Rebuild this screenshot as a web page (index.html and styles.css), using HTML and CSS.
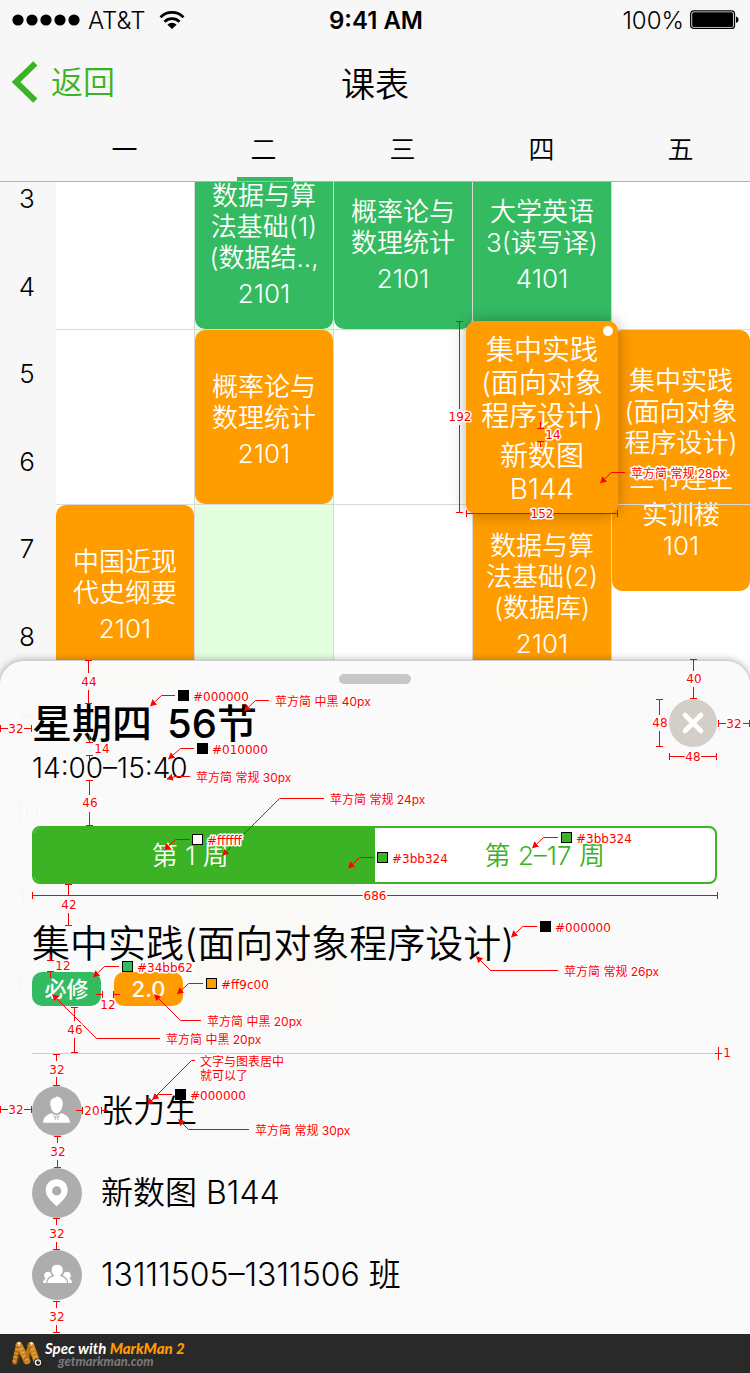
FILE: index.html
```html
<!DOCTYPE html>
<html lang="zh-CN">
<head>
<meta charset="utf-8">
<meta name="viewport" content="width=device-width, initial-scale=1">
<title>课表</title>
<link rel="stylesheet" href="styles.css">
</head>
<body>
<div class="page">
  <header class="top">
    <div class="status">
      <div class="status-side">
        <svg class="signal" width="68" height="12" viewBox="0 0 68 12" aria-hidden="true"><circle cx="6" cy="6" r="5.6"/><circle cx="20" cy="6" r="5.6"/><circle cx="34" cy="6" r="5.6"/><circle cx="48" cy="6" r="5.6"/><circle cx="62" cy="6" r="5.6"/></svg>
        <span>AT&amp;T</span>
        <svg class="wifi" width="26" height="20" viewBox="0 0 26 20" aria-hidden="true"><path d="M1.5 7.2a16.3 16.3 0 0 1 23 0M5.5 11.7a10.8 10.8 0 0 1 15 0" fill="none" stroke="#000" stroke-width="2.7"/><path d="M8.4 14.7a6.6 6.6 0 0 1 9.2 0L13 19z"/></svg>
      </div>
      <span class="clock">9:41 AM</span>
      <div class="status-side status-right">
        <span>100%</span>
        <svg width="50" height="20" viewBox="0 0 50 20" aria-hidden="true"><rect x=".7" y=".8" width="43.8" height="17.6" rx="3" fill="none" stroke="#000" stroke-width="1.3"/><rect x="2.2" y="2.3" width="40.8" height="14.6" rx="1.5"/><path d="M46 6.4c3.4.9 3.4 5.500 0 6.400z"/></svg>
      </div>
    </div>
    <div class="nav">
      <a class="back" href="#">
        <svg width="26" height="42" viewBox="0 0 26 42" aria-hidden="true"><path d="M23.300 2.300 4 21l19.300 18.700" fill="none" stroke="#3bb324" stroke-width="6"/></svg>
        <span>返回</span>
      </a>
      <h1>课表</h1>
    </div>
    <nav class="days">
      <a href="#">一</a><a class="on" href="#">二</a><a href="#">三</a><a href="#">四</a><a href="#">五</a>
    </nav>
  </header>

  <main class="stage">
    <section class="table">
      <div class="hours r1"><span>3</span><span>4</span></div>
      <div class="hours r2"><span>5</span><span>6</span></div>
      <div class="hours r3"><span>7</span><span>8</span></div>
      <div class="hours r4"><span>9</span><span>10</span></div>
      <div class="hours r5"><span>11</span><span>12</span></div>
      <div class="col c1"></div><div class="col c2 today"></div><div class="col c3"></div><div class="col c4"></div><div class="col c5"></div>
      <div class="line r1"></div><div class="line r2"></div><div class="line r3"></div><div class="line r4"></div>

      <article class="card green c2 r1"><p>数据与算<br>法基础(1)<br>(数据结..,</p><p>2101</p></article>
      <article class="card green c3 r1"><p>概率论与<br>数理统计</p><p>2101</p></article>
      <article class="card green c4 r1"><p>大学英语<br>3(读写译)</p><p>4101</p></article>
      <article class="card c2 r2"><p>概率论与<br>数理统计</p><p>2101</p></article>
      <article class="card tall c5"><p>集中实践<br>(面向对象<br>程序设计)</p><p>三节连上</p><p>实训楼<br>101</p></article>
      <article class="card c1 r3"><p>中国近现<br>代史纲要</p><p>2101</p></article>
      <article class="card c4 r3"><p>数据与算<br>法基础(2)<br>(数据库)</p><p>2101</p></article>
      <article class="card c2 r5"><p>概率论与<br>数理统计</p><p>2101</p></article>
      <article class="card picked c4 r2"><i class="dot"></i><p>集中实践<br>(面向对象<br>程序设计)</p><p>新数图<br>B144</p></article>
    </section>

    <section class="sheet">
      <div class="handle"></div>
      <div class="sheet-head">
        <div>
          <h2><span>星期四</span> <span>56节</span></h2>
          <p class="time">14:00–15:40</p>
        </div>
        <button class="close" type="button" aria-label="关闭">
          <svg width="48" height="48" viewBox="0 0 48 48" aria-hidden="true"><path d="M16 16l16 16M32 16L16 32" stroke="#fff" stroke-width="4.600" stroke-linecap="round"/></svg>
        </button>
      </div>
      <div class="segment">
        <button class="seg on" type="button">第 1 周</button>
        <button class="seg" type="button">第 2–17 周</button>
      </div>
      <h3>集中实践(面向对象程序设计)</h3>
      <div class="tags"><span class="tag green">必修</span><span class="tag">2.0</span></div>
      <ul class="facts">
        <li>
          <svg width="50" height="50" viewBox="0 0 50 50" aria-hidden="true"><circle cx="25" cy="25" r="25" fill="#adadad"/><path fill="#fff" d="M24.500 10.500c3.900.4 6.300 2.800 6.200 7-.1 4.700-2.600 9.900-6.200 10s-6.200-5.300-6.200-10c0-3.900 1.700-5.500 5.400-6.100zM19.500 27.300l5 2.200 5-2.200c4.300 1.300 7.900 3.200 8.500 9.500H11c.6-6.300 4.200-8.200 8.500-9.500z"/><path d="M21.200 28.500l1.700 3.300 1.600-2 1.600 2 1.700-3.300M23.700 31l-.6 3M25.300 31l.6 3" fill="none" stroke="#adadad" stroke-width=".8"/></svg>
          <span>张力生</span>
        </li>
        <li>
          <svg width="50" height="50" viewBox="0 0 50 50" aria-hidden="true"><circle cx="25" cy="25" r="25" fill="#adadad"/><path fill="#fff" fill-rule="evenodd" d="M24.700 11.300c6.100 0 11 4.600 11 10.600 0 6.700-5.800 11.200-11 16.400-5.200-5.200-11-9.700-11-16.400 0-6 4.900-10.600 11-10.600zm0 7a4.600 4.600 0 1 0 0 9.200 4.600 4.600 0 0 0 0-9.200z"/></svg>
          <span>新数图 B144</span>
        </li>
        <li>
          <svg width="50" height="50" viewBox="0 0 50 50" aria-hidden="true"><circle cx="25" cy="25" r="25" fill="#adadad"/><g fill="#fff"><circle cx="16" cy="25.500" r="3.800"/><circle cx="35" cy="25.500" r="3.800"/><path d="M11 33c0-3.300 2.400-4.800 5-4.800s4 1.500 4 4.800zM40 33c0-3.300-2.400-4.800-5-4.800s-4 1.500-4 4.800z"/><path stroke="#adadad" stroke-width="1.200" d="M25.200 14.200c3.700 0 6.200 2.600 6.200 6 0 2.300-.9 4.200-2.500 5.500 4 1.100 6.700 3.200 6.900 7.800H14.600c.2-4.600 2.900-6.700 6.900-7.800-1.600-1.300-2.500-3.200-2.500-5.500 0-3.400 2.500-6 6.200-6z"/></g></svg>
          <span>13111505–1311506 班</span>
        </li>
      </ul>
    </section>
  </main>

  <footer class="foot">
    <svg width="32" height="28" viewBox="0 0 32 28" aria-hidden="true">
      <g fill="none" stroke-linecap="round"><path d="M8 5L4 22M20 5l-5 16" stroke="#7a480d" stroke-width="6"/><path d="M8 5l8 16M20 5l6 17" stroke="#d08522" stroke-width="6.500"/><path d="M7 5L3.500 22M19 5l-4.500 15" stroke="#b87318" stroke-width="4"/><path d="M8 5l8 16M20 5l6 17M7 5L3 22" stroke="#f0b65a" stroke-width="3.500" stroke-dasharray="1 3" stroke-linecap="butt"/></g>
      <circle cx="8" cy="3.500" r="1.200" fill="#fff"/><circle cx="20.500" cy="3.500" r="1.200" fill="#fff"/><circle cx="27" cy="22.500" r="4" fill="#111"/><circle cx="27" cy="22.500" r="3.200" fill="#fff"/><circle cx="27.200" cy="22.500" r="2" fill="#111"/><circle cx="28" cy="21.800" r=".7" fill="#fff"/>
    </svg>
    <div>
      <p class="brand">Spec with <b>MarkMan 2</b></p>
      <p class="site">getmarkman.com</p>
    </div>
  </footer>

  <svg class="notes" width="750" height="1373" viewBox="0 0 750 1373">
    <defs>
      <marker id="tip" markerUnits="userSpaceOnUse" markerWidth="8" markerHeight="8" refX="6" refY="3.500" orient="auto"><path d="M0 0l6.500 3.500L0 7z" fill="#f00" stroke="none"/></marker>
    </defs>
    <g class="dim">
      <path d="M456 321.500h7M459.500 321.500V409M459.500 425V512.500M456 512.500h7"/>
      <path d="M540.500 422V428.500M537 428.500h7M537 441.500h7M540.500 441.500V447"/>
      <path d="M466.500 510v7M466.500 513.500H530M553 513.500H617.500M617.500 510v7"/>
      <path d="M85 660.500h7M88.500 660.500V673M88.500 690V703.500M85 703.500h7"/>
      <path d="M.5 725v7M.5 728.500H8M24 728.500H31.500M31.500 725v7"/>
      <path d="M89.500 736V742.500M86 742.500h7M86 755.500h7M89.500 755.500V761"/>
      <path d="M86 780.500h7M89.500 780.500V795M89.500 812V825.500M86 825.500h7"/>
      <path d="M690 659.500h7M693.500 659.500V671M693.500 687V698.500M690 698.500h7"/>
      <path d="M656 699.500h7M659.500 699.500V715M659.500 731V746.500M656 746.500h7"/>
      <path d="M718.500 720v7M718.500 723.500H726M743 723.500H749.500M749.500 720v7"/>
      <path d="M669.500 753v7M669.500 756.500H685M701 756.500H716.500M716.500 753v7"/>
      <path d="M32.500 892v7M32.500 895.500H363M387 895.500H717.500M717.500 892v7"/>
      <path d="M65 884.500h7M68.500 884.500V896M68.500 913V925.500M65 925.500h7"/>
      <path d="M50.500 954V960.500M47 960.500h7M47 971.500h7M50.500 971.500V978"/>
      <path d="M96 994.500H102.500M102.500 991v7M113.500 991v7M113.500 994.500H120"/>
      <path d="M71 1007.500h7M74.500 1007.500V1021M74.500 1038V1052.500M71 1052.500h7"/>
      <path d="M718.500 1047v13M715 1053.500h7"/>
      <path d="M53 1054.500h7M56.500 1054.500V1061M56.500 1077V1085.500M53 1085.500h7"/>
      <path d="M.5 1106v7M.5 1109.500H8M24 1109.500H31.500M31.500 1106v7"/>
      <path d="M76 1110.500H82.500M82.500 1107v7M101.500 1107v7M101.500 1110.500H108"/>
      <path d="M54 1136.500h7M57.500 1136.500V1143M57.500 1160V1167.500M54 1167.500h7"/>
      <path d="M53 1218.500h7M56.500 1218.500V1225M56.500 1242V1249.500M53 1249.500h7"/>
      <path d="M53 1301.500h7M56.500 1301.500V1308M56.500 1325V1332.500M53 1332.500h7"/>
    </g>
    <g class="lead">
      <path d="M625 472.500H611.500L600.500 483"/>
      <path d="M175 695.500H161.500L150.500 706"/>
      <path d="M269 700.500H255.500L244.500 711"/>
      <path d="M194 748.500H180.500L168.500 759"/>
      <path d="M190 776.500H175L167 779"/>
      <path d="M324 798.500H279.500L222.500 855.500"/>
      <path d="M190 839.500H175.500L164.500 850"/>
      <path d="M374 857.500H359.500L348.500 868"/>
      <path d="M558 837.500H543.500L532.500 848"/>
      <path d="M537 926.500H522.500L511.500 937"/>
      <path d="M558 970.500H490.500L476.500 956.500"/>
      <path d="M119 966.500H104.500L93.500 977"/>
      <path d="M203 983.500H188.500L177.500 994"/>
      <path d="M201 1020.500H180.500L154.500 994.500"/>
      <path d="M160 1038.500H96.500L52.500 994.500"/>
      <path d="M195 1060.500H191.500L147.500 1104.500"/>
      <path d="M172 1094.500H158.500L152.500 1099.500"/>
      <path d="M249 1129.500H188.500L178.500 1119.500"/>
    </g>
    <g class="swatch">
      <rect x="178.500" y="690.500" width="10" height="10" fill="#000"/>
      <rect x="197.500" y="743.500" width="10" height="10" fill="#010000"/>
      <rect x="192.500" y="834.500" width="10" height="10" fill="#fff"/>
      <rect x="377.500" y="852.500" width="10" height="10" fill="#3bb324"/>
      <rect x="561.500" y="832.500" width="10" height="10" fill="#3bb324"/>
      <rect x="540.500" y="921.500" width="10" height="10" fill="#000"/>
      <rect x="122.500" y="961.500" width="10" height="10" fill="#34bb62"/>
      <rect x="206.500" y="978.500" width="10" height="10" fill="#ff9c00"/>
      <rect x="175.500" y="1089.500" width="10" height="10" fill="#000"/>
    </g>
    <g class="num">
      <text x="460" y="421">192</text><text x="553" y="439">14</text><text x="542" y="518">152</text>
      <text x="89" y="686">44</text><text x="16" y="733">32</text><text x="102" y="753">14</text><text x="90" y="807">46</text>
      <text x="694" y="683">40</text><text x="660" y="727">48</text><text x="734" y="728">32</text><text x="693" y="761">48</text>
      <text x="375" y="900">686</text><text x="69" y="909">42</text><text x="63" y="970">12</text><text x="108" y="1009">12</text>
      <text x="75" y="1034">46</text><text x="727" y="1057">1</text><text x="57" y="1074">32</text><text x="16" y="1114">32</text>
      <text x="92" y="1115">20</text><text x="58" y="1156">32</text><text x="57" y="1238">32</text><text x="57" y="1321">32</text>
    </g>
    <g class="hex">
      <text x="193" y="701">#000000</text><text x="212" y="754">#010000</text><text x="207" y="845">#ffffff</text>
      <text x="392" y="863">#3bb324</text><text x="576" y="843">#3bb324</text><text x="555" y="932">#000000</text>
      <text x="137" y="972">#34bb62</text><text x="221" y="989">#ff9c00</text><text x="190" y="1100">#000000</text>
    </g>
    <g class="label">
      <text x="631" y="478">苹方简 常规 28px</text><text x="275" y="706">苹方简 中黑 40px</text><text x="196" y="782">苹方简 常规 30px</text>
      <text x="330" y="804">苹方简 常规 24px</text><text x="564" y="976">苹方简 常规 26px</text><text x="207" y="1026">苹方简 中黑 20px</text>
      <text x="166" y="1044">苹方简 中黑 20px</text><text x="200" y="1066">文字与图表居中</text><text x="200" y="1080">就可以了</text><text x="255" y="1135">苹方简 常规 30px</text>
    </g>
  </svg>
</div>
</body>
</html>
```
FILE: styles.css
```css
* { box-sizing: border-box; }
body, h1, h2, h3, p, ul { margin: 0; padding: 0; }
body {
  background: #fff;
  color: #000;
  font-family: Inter, "Noto Sans CJK SC", sans-serif;
  font-weight: 350;
}
a { color: inherit; text-decoration: none; }
button { border: 0; padding: 0; background: none; font: inherit; color: inherit; }
.page { position: relative; overflow: hidden; }

.top { background: #f7f7f7; border-bottom: 1px solid #b2b2b2; }
.status {
  display: grid;
  grid-template-columns: 1fr auto 1fr;
  align-items: center;
  height: 40px;
  padding: 0 10px 0 12px;
  font-size: 24px;
}
.status-side { display: flex; align-items: center; gap: 8px; }
.status-right { justify-content: flex-end; gap: 6px; }
.wifi { margin-left: 6px; }
.clock { font-weight: 600; }
.nav {
  display: grid;
  grid-template-columns: 1fr auto 1fr;
  align-items: center;
  height: 84px;
  padding: 0 12px;
}
.back { display: flex; align-items: center; gap: 13px; font-size: 32px; color: #3bb324; }
.back span { padding-bottom: 4px; }
h1 { font-size: 34px; font-weight: 350; }
.days, .table { display: grid; grid-template-columns: 56px repeat(5, minmax(139px, 1fr)); }
.days { height: 57px; font-size: 26px; }
.days a { display: flex; justify-content: center; padding: 5px 2px 0 0; }
.days a:first-child { grid-column: 2; }
.days .on { background: linear-gradient(#34bb62, #34bb62) center bottom / 56px 4px no-repeat; }

.stage { display: grid; grid-template-columns: minmax(0, 1fr); overflow: hidden; }
.table {
  grid-area: 1 / 1;
  grid-template-rows: repeat(5, 175px);
  align-content: start;
  margin-top: -27px;
  background: linear-gradient(#f7f7f7, #f7f7f7) left / 56px 100% no-repeat;
}
.c1 { grid-column: 2; } .c2 { grid-column: 3; } .c3 { grid-column: 4; } .c4 { grid-column: 5; } .c5 { grid-column: 6; }
.r1 { grid-row: 1; } .r2 { grid-row: 2; } .r3 { grid-row: 3; } .r4 { grid-row: 4; } .r5 { grid-row: 5; }
.hours { grid-column: 1; display: grid; grid-template-rows: 1fr 1fr; place-items: center; font-size: 26px; padding-right: 2px; }
.col { grid-row: 1 / -1; border-right: 1px solid #d9d9d9; }
.c5.col { border-right: 0; }
.today { background: #e3ffe0; }
.line { grid-column: 2 / -1; border-bottom: 1px solid #d9d9d9; z-index: 1; }
.card {
  display: flex;
  flex-direction: column;
  justify-content: center;
  gap: 5px;
  margin: 0 1px 1px 0;
  padding-top: 5px;
  border-radius: 10px;
  background: #ff9c00;
  color: #fff;
  font-size: 26px;
  line-height: 31px;
  text-align: center;
  white-space: nowrap;
}
.green { background: #34bb62; }
.tall { grid-row: 2 / 4; margin: 0 1px 89px 0; }
.picked {
  position: relative;
  z-index: 2;
  margin: -9px -6px -9px -7px;
  padding-top: 4px;
  gap: 7px;
  font-size: 28px;
  line-height: 33px;
  box-shadow: 0 0 16px rgba(0, 0, 0, .3);
}
.dot { position: absolute; top: 5px; right: 5px; width: 10px; height: 10px; border-radius: 50%; background: #fff; }

.sheet {
  grid-area: 1 / 1;
  z-index: 3;
  margin-top: 479px;
  padding: 13px 33px 34px 32px;
  border-radius: 24px 24px 0 0;
  background: rgba(250, 250, 250, .985);
  box-shadow: 0 0 0 1px #d0d0d0, 0 0 8px rgba(0, 0, 0, .4);
}
.handle { width: 72px; height: 10px; margin: 0 auto; border-radius: 5px; background: #c7c7c7; }
.sheet-head { display: flex; justify-content: space-between; align-items: flex-start; margin-top: 15px; height: 127px; }
h2 { display: flex; gap: 15px; font-size: 40px; line-height: 50px; font-weight: 500; }
.time { font-size: 28px; line-height: 38px; }
.close { width: 48px; height: 48px; border-radius: 50%; background: #d3cfc8; }
.close svg { display: block; }
.segment { display: flex; height: 58px; border: 2px solid #3bb324; border-radius: 8px; background: #fff; overflow: hidden; }
.seg { flex: none; width: 50%; padding-bottom: 4px; font-size: 26px; color: #3bb324; }
.seg.on { padding-right: 28px; background: #3bb324; color: #fff; }
h3 { margin-top: 35px; font-size: 38px; line-height: 48px; font-weight: 350; }
.tags { display: flex; gap: 13px; margin-top: 5px; padding-bottom: 47px; border-bottom: 1px solid #ccc; }
.tag { width: 69px; height: 34px; border-radius: 10px; background: #ff9c00; color: #fff; font-size: 22px; line-height: 34px; font-weight: 500; text-align: center; }
.tag.green { background: #34bb62; }
.facts { display: grid; gap: 32px; margin-top: 32px; list-style: none; }
.facts li { display: flex; align-items: center; gap: 19px; height: 50px; font-size: 32px; line-height: 50px; }

.foot { display: flex; align-items: center; gap: 2px; height: 39px; padding-left: 11px; background: #292929; color: #fff; font-family: Lato, sans-serif; font-style: italic; font-weight: 700; }
.brand { font-size: 15px; line-height: 14px; }
.brand b { color: #ff9c00; }
.site { padding-left: 13px; font-size: 13px; line-height: 12px; color: #7b7b7b; }

/* measurement layer drawn above the interface */
.notes { position: absolute; top: 0; left: 0; z-index: 5; pointer-events: none; }
.dim, .lead { fill: none; stroke: #f00; stroke-width: 1; }
.lead path { marker-end: url(#tip); }
.swatch rect { stroke: #000; }
.notes text { fill: #f00; stroke: #fff; stroke-width: 3px; stroke-linejoin: round; paint-order: stroke; font-size: 12px; }
.num, .hex { font-family: "DejaVu Sans", sans-serif; font-weight: 400; }
.num { text-anchor: middle; }
.label { font-weight: 400; }
```
